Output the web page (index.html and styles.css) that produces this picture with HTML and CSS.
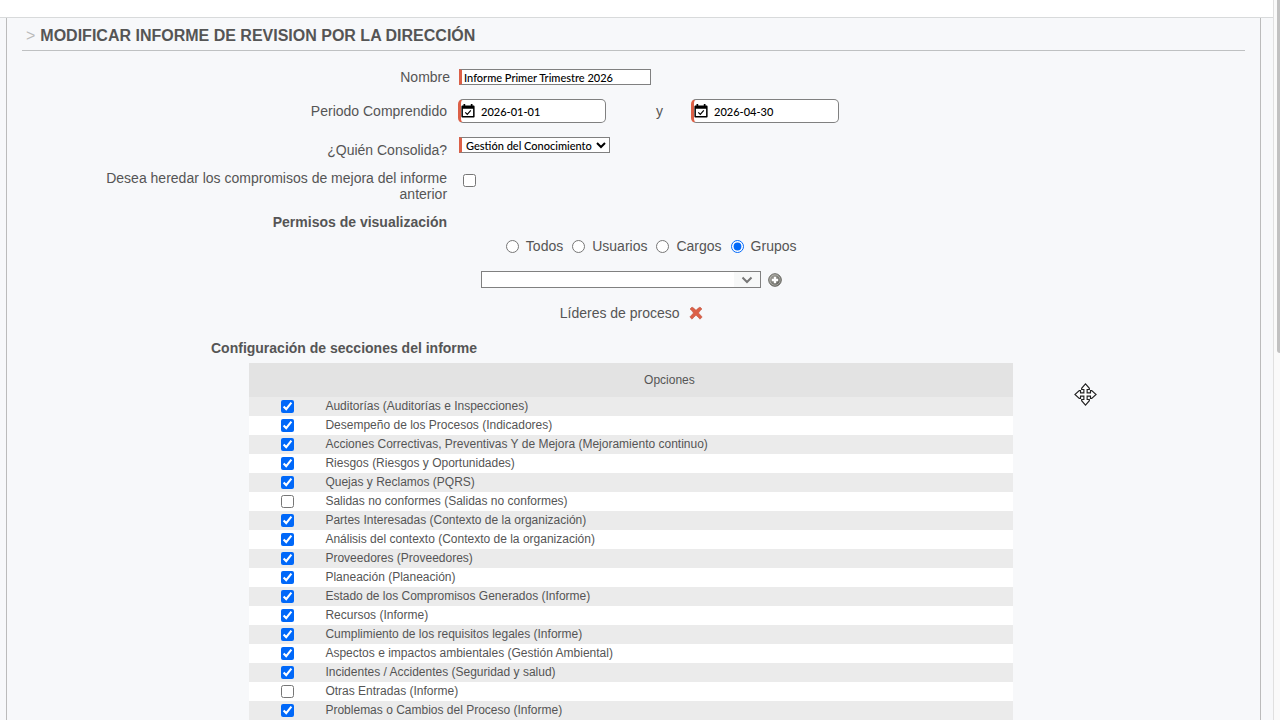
FILE: index.html
```html
<!DOCTYPE html>
<html lang="es">
<head>
<meta charset="UTF-8">
<title>Modificar informe de revision por la dirección</title>
<meta name="viewport" content="width=device-width, initial-scale=1.0">

<link rel="stylesheet" href="styles.css">
</head>

<body>

<div class="page">
    <div class="frame">
        <div class="topbar"></div>

        <main class="panel">
            <h1><span class="caret">&gt;</span>MODIFICAR INFORME DE REVISION POR LA DIRECCIÓN</h1>

            <div class="form">
                <label class="label label-close" for="nombre">Nombre</label>
                <div class="field field-name">
                    <input class="control name" type="text" id="nombre" value="Informe Primer Trimestre 2026">
                </div>

                <label class="label label-period" for="desde">Periodo Comprendido</label>
                <div class="field field-period">
                    <div class="date">
                        <svg class="calendar" viewBox="0 0 14 14"><path fill="#000" fill-rule="evenodd" d="M2.5 0h1.7v1.4h5.6V0h1.7v1.4h.9c.7 0 1.2.5 1.2 1.2v9.8c0 .7-.5 1.2-1.2 1.2H1.6c-.7 0-1.2-.5-1.2-1.2V2.600c0-.7.5-1.200 1.200-1.200h.9zM1.900 4.800v7.300h10.200V4.800z"/><path fill="none" stroke="#000" stroke-width="1.200" d="M4.300 8.300l2 2 3.500-3.900"/></svg>
                        <input type="text" id="desde" value="2026-01-01">
                    </div>
                    <label class="and" for="hasta">y</label>
                    <div class="date">
                        <svg class="calendar" viewBox="0 0 14 14"><path fill="#000" fill-rule="evenodd" d="M2.5 0h1.7v1.4h5.6V0h1.7v1.4h.9c.7 0 1.2.5 1.2 1.2v9.8c0 .7-.5 1.2-1.2 1.2H1.6c-.7 0-1.2-.5-1.2-1.2V2.600c0-.7.5-1.200 1.200-1.200h.9zM1.900 4.800v7.300h10.200V4.800z"/><path fill="none" stroke="#000" stroke-width="1.200" d="M4.300 8.300l2 2 3.500-3.900"/></svg>
                        <input type="text" id="hasta" value="2026-04-30">
                    </div>
                </div>

                <label class="label label-owner" for="consolida">¿Quién Consolida?</label>
                <div class="field">
                    <select class="control owner" id="consolida">
                        <option>Gestión del Conocimiento</option>
                    </select>
                </div>

                <label class="label" for="heredar">Desea heredar los compromisos de mejora del informe anterior</label>
                <div class="field field-check">
                    <input type="checkbox" id="heredar">
                </div>

                <h2 class="label">Permisos de visualización</h2>
            </div>

            <div class="permissions">
                <div class="radios">
                    <label><input type="radio" name="permiso">Todos</label>
                    <label><input type="radio" name="permiso">Usuarios</label>
                    <label><input type="radio" name="permiso">Cargos</label>
                    <label><input type="radio" name="permiso" checked>Grupos</label>
                </div>

                <div class="picker">
                    <div class="combo">
                        <select aria-label="Grupo">
                            <option></option>
                        </select>
                        <span class="arrow"><svg viewBox="0 0 12 8"><path fill="none" stroke="#777" stroke-width="2" d="M1.500 1.500L6 6l4.500-4.500"/></svg></span>
                    </div>
                    <button class="icon-button" type="button" aria-label="Agregar">
                        <svg viewBox="0 0 14 14">
                            <defs>
                                <linearGradient id="ball" x1="0" y1="0" x2="1" y2="1">
                                    <stop offset="0" stop-color="#aaa9a2"/>
                                    <stop offset="1" stop-color="#53534e"/>
                                </linearGradient>
                            </defs>
                            <circle cx="7" cy="7" r="6.300" fill="url(#ball)" stroke="#686862"/>
                            <circle cx="7" cy="7" r="5.200" fill="none" stroke="#bdbdb7" stroke-width="0.700"/>
                            <path fill="#fff" d="M5.800 3.800h2.400v2h2v2.400h-2v2H5.800v-2h-2V5.800h2z"/>
                        </svg>
                    </button>
                </div>

                <div class="chosen">
                    <span>Líderes de proceso</span>
                    <button class="icon-button" type="button" aria-label="Eliminar">
                        <svg viewBox="0 0 14 14"><path fill="#dc6047" stroke="#b9523e" stroke-width="0.500" d="M1 3l2-2c1.700.9 3 2.100 4 3.300C8 3.100 9.300 1.900 11 1l2 2c-1.300 1-2.500 2.400-3.500 4 1.300 1.300 2.500 2.600 3.700 4L11 13.200c-1.200-1.500-2.500-2.800-4-4-1.500 1.200-2.800 2.500-4 4L.8 11c1.200-1.400 2.400-2.700 3.700-4C3.500 5.400 2.300 4 1 3z"/></svg>
                    </button>
                </div>
            </div>

            <h2 class="sections-title">Configuración de secciones del informe</h2>

            <table class="sections">
                <thead>
                    <tr><th></th><th>Opciones</th></tr>
                </thead>
                <tbody>
                    <tr><td><input type="checkbox" id="s1" checked></td><td><label for="s1">Auditorías (Auditorías e Inspecciones)</label></td></tr>
                    <tr><td><input type="checkbox" id="s2" checked></td><td><label for="s2">Desempeño de los Procesos (Indicadores)</label></td></tr>
                    <tr><td><input type="checkbox" id="s3" checked></td><td><label for="s3">Acciones Correctivas, Preventivas Y de Mejora (Mejoramiento continuo)</label></td></tr>
                    <tr><td><input type="checkbox" id="s4" checked></td><td><label for="s4">Riesgos (Riesgos y Oportunidades)</label></td></tr>
                    <tr><td><input type="checkbox" id="s5" checked></td><td><label for="s5">Quejas y Reclamos (PQRS)</label></td></tr>
                    <tr><td><input type="checkbox" id="s6"></td><td><label for="s6">Salidas no conformes (Salidas no conformes)</label></td></tr>
                    <tr><td><input type="checkbox" id="s7" checked></td><td><label for="s7">Partes Interesadas (Contexto de la organización)</label></td></tr>
                    <tr><td><input type="checkbox" id="s8" checked></td><td><label for="s8">Análisis del contexto (Contexto de la organización)</label></td></tr>
                    <tr><td><input type="checkbox" id="s9" checked></td><td><label for="s9">Proveedores (Proveedores)</label></td></tr>
                    <tr><td><input type="checkbox" id="s10" checked></td><td><label for="s10">Planeación (Planeación)</label></td></tr>
                    <tr><td><input type="checkbox" id="s11" checked></td><td><label for="s11">Estado de los Compromisos Generados (Informe)</label></td></tr>
                    <tr><td><input type="checkbox" id="s12" checked></td><td><label for="s12">Recursos (Informe)</label></td></tr>
                    <tr><td><input type="checkbox" id="s13" checked></td><td><label for="s13">Cumplimiento de los requisitos legales (Informe)</label></td></tr>
                    <tr><td><input type="checkbox" id="s14" checked></td><td><label for="s14">Aspectos e impactos ambientales (Gestión Ambiental)</label></td></tr>
                    <tr><td><input type="checkbox" id="s15" checked></td><td><label for="s15">Incidentes / Accidentes (Seguridad y salud)</label></td></tr>
                    <tr><td><input type="checkbox" id="s16"></td><td><label for="s16">Otras Entradas (Informe)</label></td></tr>
                    <tr><td><input type="checkbox" id="s17" checked></td><td><label for="s17">Problemas o Cambios del Proceso (Informe)</label></td></tr>
                </tbody>
            </table>
        </main>
    </div>

    <div class="track"><div class="thumb"></div></div>
</div>

<svg class="cursor" viewBox="0 0 24 24"><path fill="#fff" stroke="#222" stroke-width="1.200" d="M12 1l4 4.500v1.300h-2.300v3.500h3.500V8h1.300l4.500 4-4.500 4h-1.300v-2.300h-3.500v3.500H16v1.300L12 23l-4-4.500v-1.300h2.300v-3.500H6.800V16H5.500L1 12l4.500-4h1.300v2.300h3.500V6.800H8V5.500z"/></svg>

</body>
</html>
```

FILE: styles.css
```css
* {
    margin: 0;
    padding: 0;
    box-sizing: border-box;
}

body {
    font-family: "Liberation Sans", Arial, sans-serif;
    font-size: 14px;
    line-height: 16px;
    color: #555;
    background: #fff;
    overflow: hidden;
}

.page {
    display: flex;
    height: 100vh;
    overflow: hidden;
}

.frame {
    flex: 1;
    background: #f7f8fa;
}

.topbar {
    height: 18px;
    background: #fff;
    border-bottom: 1px solid #d8dadb;
}

.panel {
    margin: 0 12px 0 6px;
    padding: 0 15px;
    border-left: 1px solid #bbb;
    border-right: 1px solid #bbb;
}

h1 {
    padding: 10px 4px 6px;
    border-bottom: 1px solid #bfc1c2;
    font-size: 16px;
}

h2 {
    font-size: 14px;
}

.caret {
    margin-right: 5px;
    color: #bbb;
    font-weight: normal;
}

input[type="checkbox"],
input[type="radio"] {
    display: block;
    width: 13px;
    height: 13px;
    accent-color: #0068f9;
}

/* Form */
.form {
    display: grid;
    grid-template-columns: 35% 1fr;
    gap: 12px 8px;
    align-items: start;
    padding-top: 18px;
}

.label {
    padding-right: 3px;
    padding-left: 80px;
    text-align: right;
}

.label-close {
    padding-right: 0;
}

.label-period {
    padding-top: 4px;
}

.label-owner {
    padding-top: 5px;
}

.field {
    display: flex;
}

.field-name,
.field-period {
    padding-bottom: 2px;
}

.field-check {
    padding: 4px 5px;
}

.control,
.date input {
    border: 1px solid #808080;
    border-left: 3px solid #dc6047;
    background: #fff;
    color: #000;
    font-family: "Trebuchet MS", Lato, sans-serif;
    font-size: 11px;
    font-weight: 500;
}

.control {
    height: 16px;
    margin-left: 1px;
}

.name {
    width: 192px;
    padding: 0 2px;
}

.owner {
    width: 151px;
}

.date {
    position: relative;
}

.date input {
    display: block;
    width: 148px;
    height: 24px;
    padding-left: 20px;
    border-radius: 5px;
}

.calendar {
    position: absolute;
    top: 5px;
    left: 3px;
    width: 14px;
    height: 14px;
}

.and {
    width: 85px;
    padding-top: 4px;
    padding-left: 22px;
    text-align: center;
}

/* Permissions */
.permissions {
    display: flex;
    flex-direction: column;
    align-items: center;
    gap: 17px;
    width: 62.5%;
    margin: 8px 0 19px 227px;
}

.radios {
    display: flex;
    gap: 9px;
    padding-left: 40px;
}

.radios label {
    display: flex;
    align-items: center;
    gap: 7px;
}

.picker,
.chosen {
    display: flex;
    align-items: center;
    gap: 7px;
}

.combo {
    position: relative;
    width: 280px;
}

.combo select {
    display: block;
    width: 100%;
    height: 17px;
    border: 1px solid #808080;
    border-radius: 0;
    background: #fff;
    appearance: none;
}

.arrow {
    position: absolute;
    top: 1px;
    right: 1px;
    bottom: 1px;
    display: flex;
    align-items: center;
    justify-content: center;
    width: 26px;
    background: #f7f8f8;
    pointer-events: none;
}

.arrow svg {
    width: 12px;
    height: 8px;
}

.icon-button {
    width: 14px;
    height: 14px;
    border: none;
    background: none;
    cursor: pointer;
}

.icon-button svg {
    display: block;
    width: 14px;
    height: 14px;
}

.chosen {
    gap: 9px;
}

/* Sections table */
.sections-title {
    margin-left: 189px;
    padding-bottom: 7px;
}

.sections {
    width: 62.5%;
    margin-left: 227px;
    border-collapse: collapse;
    font-size: 12px;
    line-height: 19px;
}

.sections th {
    height: 34px;
    background: #e3e3e3;
    font-weight: normal;
}

.sections th:first-child {
    width: 10%;
}

.sections td {
    height: 19px;
    background: #fff;
}

.sections tr:nth-child(odd) td {
    background: #ebebeb;
}

.sections td input {
    margin: 0 auto;
}

.sections label {
    display: block;
}

/* Scroll bar */
.track {
    width: 7px;
    padding-left: 3px;
    border-left: 1px solid #e0e0e0;
    background: #fafafa;
}

.thumb {
    height: 49vh;
    background: #c1c1c1;
    border-bottom-left-radius: 3px;
}

.cursor {
    position: absolute;
    top: 383px;
    left: 1074px;
    width: 23px;
    height: 23px;
}
```
